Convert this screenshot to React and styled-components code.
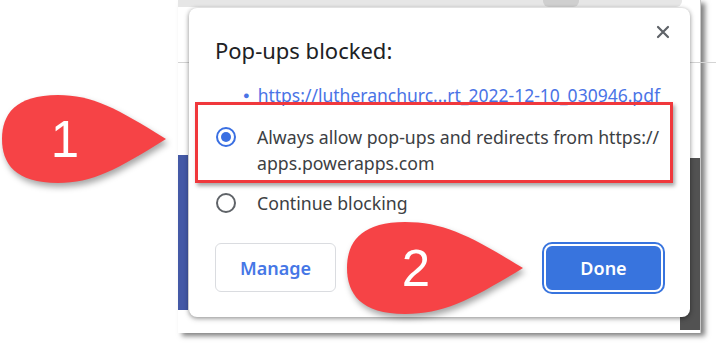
import React from "react";
import styled, { createGlobalStyle } from "styled-components";

const GlobalStyle = createGlobalStyle`
  html, body {
    margin: 0;
    padding: 0;
    background: #ffffff;
  }
  body {
    font-family: "Noto Sans", "Open Sans", sans-serif;
  }
`;

const Stage = styled.div`
  position: relative;
  width: 716px;
  height: 347px;
  overflow: hidden;
  background: #ffffff;
`;

const Window = styled.div`
  position: relative;
  margin-left: 178px;
  width: 522px;
  height: 333px;
  background: #ffffff;
  border-right: 1px solid #c8c8c8;
  box-shadow: 4px 3px 5px rgba(0, 0, 0, 0.5);
  display: flex;
  flex-direction: column;
`;

const TabStrip = styled.div`
  height: 7px;
  width: 504px;
  background: #e6e6e6;
  border-bottom-right-radius: 6px;
  display: flex;
  padding-left: 365px;
  box-sizing: border-box;
`;

const TabPill = styled.div`
  width: 36px;
  height: 7px;
  background: #cfcfcf;
  border-bottom-left-radius: 6px;
  border-bottom-right-radius: 6px;
`;

const Toolbar = styled.div`
  height: 55px;
  border-bottom: 1px solid #d4d4d4;
  margin-right: -17px;
`;

const PageBody = styled.div`
  flex: 1;
  display: flex;
  justify-content: space-between;
  padding: 92px 0 3px;
`;

const SideBar = styled.div`
  width: 10px;
  height: 155px;
  background: #4459a6;
`;

const ScrollPanel = styled.div`
  width: 20px;
  height: 172px;
  margin-top: 3px;
  background: #525252;
`;

const Dialog = styled.div`
  position: absolute;
  left: 189px;
  top: 8px;
  width: 501px;
  height: 309px;
  box-sizing: border-box;
  background: #ffffff;
  border-radius: 8px;
  box-shadow: 0 1px 4px rgba(0, 0, 0, 0.35), 0 2px 6px rgba(0, 0, 0, 0.15);
  padding: 29px 25px 0 26px;
  display: flex;
  flex-direction: column;
`;

const Header = styled.div`
  display: flex;
  justify-content: space-between;
  align-items: flex-start;
`;

const Title = styled.h2`
  margin: 0;
  font-size: 22px;
  line-height: 26px;
  font-weight: 400;
  color: #202124;
`;

const CloseButton = styled.button`
  border: none;
  background: none;
  padding: 0;
  margin: -17px -10px 0 0;
  width: 24px;
  height: 24px;
  display: flex;
  align-items: center;
  justify-content: center;
`;

const LinkRow = styled.div`
  margin: 21px 0 0 28px;
  display: flex;
  align-items: center;
  gap: 8px;
  font-size: 17.5px;
  line-height: 22px;
  color: #4a73e6;
`;

const Bullet = styled.span`
  font-size: 11px;
`;

const Link = styled.a`
  color: #4a73e6;
  text-decoration: underline;
  text-underline-offset: 2px;
`;

const Option = styled.label`
  position: relative;
  display: flex;
  align-items: flex-start;
  gap: 21px;
  margin-top: ${(p) => p.$gap}px;
  font-size: 17.7px;
  line-height: 26px;
  color: #3c4043;

  &::after {
    content: "";
    display: ${(p) => (p.$highlighted ? "block" : "none")};
    position: absolute;
    left: -20px;
    right: -8px;
    top: -22px;
    bottom: -7px;
    border: 3px solid #f0383c;
    box-shadow: 2px 3px 4px rgba(0, 0, 0, 0.35);
    pointer-events: none;
  }
`;

const Radio = styled.span`
  flex: none;
  width: 20px;
  height: 20px;
  margin: 3px 0 0 1px;
  box-sizing: border-box;
  border-radius: 50%;
  border: 2px solid ${(p) => (p.$checked ? "#3a6fe2" : "#5f6368")};
  display: flex;
  align-items: center;
  justify-content: center;

  &::before {
    content: "";
    display: ${(p) => (p.$checked ? "block" : "none")};
    width: 10px;
    height: 10px;
    border-radius: 50%;
    background: #3a6fe2;
  }
`;

const Buttons = styled.div`
  margin-top: 27px;
  display: flex;
  justify-content: space-between;
  align-items: center;
`;

const Button = styled.button`
  font-family: "Noto Sans", "Open Sans", sans-serif;
  font-size: 18px;
  font-weight: 600;
  box-sizing: border-box;
  cursor: pointer;
  border-radius: ${(p) => (p.$primary ? "8px" : "6px")};
  width: ${(p) => (p.$primary ? "119px" : "121px")};
  height: ${(p) => (p.$primary ? "48px" : "49px")};
  margin-right: ${(p) => (p.$primary ? "2px" : "0")};
  color: ${(p) => (p.$primary ? "#ffffff" : "#4677e6")};
  background: ${(p) => (p.$primary ? "#3874de" : "#ffffff")};
  border: ${(p) => (p.$primary ? "2px solid #ffffff" : "1px solid #dadce0")};
  box-shadow: ${(p) => (p.$primary ? "0 0 0 2px #3874de" : "none")};
`;

const Callout = styled.div`
  position: absolute;
  left: ${(p) => p.$x}px;
  top: ${(p) => p.$y}px;
  width: ${(p) => p.$w}px;
  height: ${(p) => p.$h}px;
  display: flex;
  align-items: center;
  filter: drop-shadow(2px 4px 3px rgba(0, 0, 0, 0.35));

  svg {
    position: absolute;
    inset: 0;
  }
`;

const Digit = styled.span`
  position: relative;
  width: ${(p) => p.$w}px;
  text-align: center;
  font-family: "Liberation Sans", Arial, sans-serif;
  font-size: 51px;
  line-height: 1;
  color: #ffffff;
`;

function Drop({ x, y, w, h, digitWidth, children }) {
  const mid = h / 2;
  const r = h / 2;
  return (
    <Callout $x={x} $y={y} $w={w} $h={h}>
      <svg width={w} height={h} viewBox={`0 0 ${w} ${h}`}>
        <path
          d={`M ${w} ${mid}
              C ${w * 0.7} ${h * 0.15}, ${w * 0.55} 0, ${r + 12} 0
              C ${r * 0.3} 0, 0 ${h * 0.22}, 0 ${mid}
              C 0 ${h * 0.78}, ${r * 0.3} ${h}, ${r + 12} ${h}
              C ${w * 0.55} ${h}, ${w * 0.7} ${h * 0.85}, ${w} ${mid} Z`}
          fill="#f64346"
        />
      </svg>
      <Digit $w={digitWidth}>{children}</Digit>
    </Callout>
  );
}

export default function App() {
  return (
    <Stage>
      <GlobalStyle />
      <Window>
        <TabStrip>
          <TabPill />
        </TabStrip>
        <Toolbar />
        <PageBody>
          <SideBar />
          <ScrollPanel />
        </PageBody>
      </Window>

      <Dialog>
        <Header>
          <Title>Pop-ups blocked:</Title>
          <CloseButton aria-label="Close">
            <svg width="14" height="14" viewBox="0 0 14 14">
              <path
                d="M2 2 L12 12 M12 2 L2 12"
                stroke="#5f6368"
                strokeWidth="2.2"
                strokeLinecap="round"
              />
            </svg>
          </CloseButton>
        </Header>
        <LinkRow>
          <Bullet>●</Bullet>
          <Link>https://lutheranchurc...rt_2022-12-10_030946.pdf</Link>
        </LinkRow>
        <Option $gap={18} $highlighted>
          <Radio $checked />
          <span>
            Always allow pop-ups and redirects from https://
            <br />
            apps.powerapps.com
          </span>
        </Option>
        <Option $gap={14}>
          <Radio />
          <span>Continue blocking</span>
        </Option>
        <Buttons>
          <Button>Manage</Button>
          <Button $primary>Done</Button>
        </Buttons>
      </Dialog>

      <Drop x={2} y={95} w={164} h={88} digitWidth={126}>
        1
      </Drop>
      <Drop x={347} y={222} w={176} h={92} digitWidth={138}>
        2
      </Drop>
    </Stage>
  );
}
